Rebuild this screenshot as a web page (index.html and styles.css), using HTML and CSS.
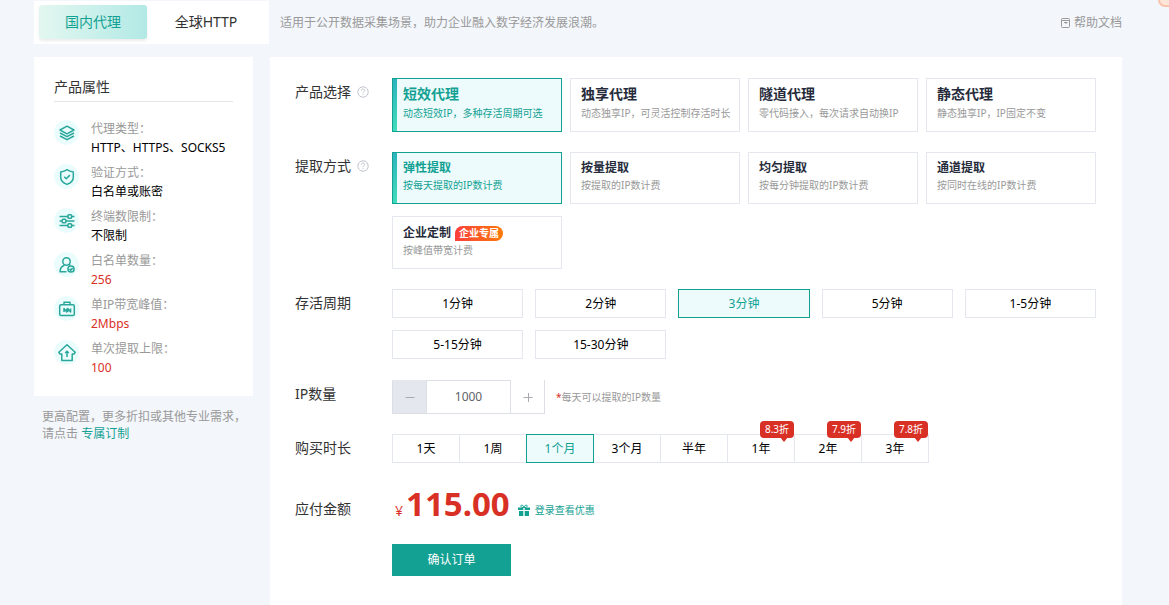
FILE: index.html
```html
<!DOCTYPE html>
<html lang="zh-CN">
<head>
<meta charset="utf-8">
<meta name="viewport" content="width=device-width, initial-scale=1">
<title>国内代理</title>
<link rel="stylesheet" href="styles.css">
</head>
<body>
<header class="topbar">
  <nav class="tabs">
    <button class="tab is-active" type="button">国内代理</button>
    <button class="tab" type="button">全球HTTP</button>
  </nav>
  <p class="topbar-note">适用于公开数据采集场景，助力企业融入数字经济发展浪潮。</p>
  <a class="help-link" href="#">
    <svg width="9" height="10" viewBox="0 0 9 10" fill="none" stroke="currentColor"><rect x=".5" y=".5" width="8" height="9" rx="1"/><path d="M1 2.5h7M3 4.5h3.5M4.5 5.5h1"/></svg>
    帮助文档
  </a>
</header>
<div class="service-badge" aria-hidden="true"></div>

<div class="layout">
  <aside class="sidebar">
    <section class="attributes">
      <h2 class="attributes-title">产品属性</h2>
      <ul class="attribute-list">
        <li class="attribute">
          <span class="attribute-icon"><svg viewBox="0 0 18 18"><path d="M9 2.2 16 6 9 9.8 2 6z"/><path d="m2 9 7 3.7L16 9M2 12l7 3.7 7-3.7"/></svg></span>
          <div><p class="attribute-name">代理类型：</p><p class="attribute-value">HTTP、HTTPS、SOCKS5</p></div>
        </li>
        <li class="attribute">
          <span class="attribute-icon"><svg viewBox="0 0 18 18"><path d="M9 1.700c2 1.500 4 2 6.300 2.200v5.300c0 3.500-2.500 5.800-6.300 7.200-3.800-1.400-6.300-3.700-6.300-7.200V3.900C5 3.700 7 3.200 9 1.700z"/><path d="m6.200 8.800 2 2 3.700-3.700"/></svg></span>
          <div><p class="attribute-name">验证方式：</p><p class="attribute-value">白名单或账密</p></div>
        </li>
        <li class="attribute">
          <span class="attribute-icon"><svg viewBox="0 0 18 18"><path d="M1.500 4.500h8.500M14 4.500h2.500M1.500 9H4M8 9h8.500M1.500 13.500h8.500M14 13.500h2.500"/><rect x="10" y="2.700" width="3.600" height="3.600" rx=".8"/><rect x="4.200" y="7.200" width="3.600" height="3.600" rx=".8"/><rect x="10" y="11.700" width="3.600" height="3.600" rx=".8"/></svg></span>
          <div><p class="attribute-name">终端数限制：</p><p class="attribute-value">不限制</p></div>
        </li>
        <li class="attribute">
          <span class="attribute-icon"><svg viewBox="0 0 18 18"><circle cx="8.500" cy="5.500" r="3.700"/><path d="M8.500 15.800H2c0-3.500 1.500-5.500 4.300-6.600M11 8.600l1.500.6"/><circle cx="13" cy="13" r="3.100"/><path d="m11.500 12.900 1.200 1.200 2-2"/></svg></span>
          <div><p class="attribute-name">白名单数量：</p><p class="attribute-value is-number">256</p></div>
        </li>
        <li class="attribute">
          <span class="attribute-icon"><svg viewBox="0 0 18 18"><rect x="1.700" y="4.700" width="14.600" height="10.800" rx="1.300"/><path d="M6 4.500V2.300h6v2.200M6 12V8.500L8.800 12V8.500M9.800 12V8.500l2.800 3.500V8.500"/></svg></span>
          <div><p class="attribute-name">单IP带宽峰值：</p><p class="attribute-value is-number">2Mbps</p></div>
        </li>
        <li class="attribute">
          <span class="attribute-icon"><svg viewBox="0 0 18 18"><path d="M9 .8 17.200 8.300 16 10h-1.800v6.600H3.800V10H2L.8 8.300z"/><path d="M9 13V7.500M7.200 9 9 7.200 10.800 9"/></svg></span>
          <div><p class="attribute-name">单次提取上限：</p><p class="attribute-value is-number">100</p></div>
        </li>
      </ul>
    </section>
    <p class="sidebar-note">更高配置，更多折扣或其他专业需求，请点击 <a href="#">专属订制</a></p>
  </aside>

  <main class="order">
    <div class="field">
      <div class="field-label">产品选择 <svg class="hint-icon" viewBox="0 0 12 12"><circle cx="6" cy="6" r="5.200"/><path d="M4.300 4.800C4.300 3.700 5 3.100 6 3.100s1.700.6 1.700 1.500C7.700 5.700 6 5.700 6 7.200M6 8.200v1"/></svg></div>
      <div class="cards">
        <button class="card card-product is-selected" type="button"><span class="card-title">短效代理</span><span class="card-text">动态短效IP，多种存活周期可选</span></button>
        <button class="card card-product" type="button"><span class="card-title">独享代理</span><span class="card-text">动态独享IP，可灵活控制存活时长</span></button>
        <button class="card card-product" type="button"><span class="card-title">隧道代理</span><span class="card-text">零代码接入，每次请求自动换IP</span></button>
        <button class="card card-product" type="button"><span class="card-title">静态代理</span><span class="card-text">静态独享IP，IP固定不变</span></button>
      </div>
    </div>

    <div class="field">
      <div class="field-label">提取方式 <svg class="hint-icon" viewBox="0 0 12 12"><circle cx="6" cy="6" r="5.200"/><path d="M4.300 4.800C4.300 3.700 5 3.100 6 3.100s1.700.6 1.700 1.500C7.700 5.700 6 5.700 6 7.200M6 8.200v1"/></svg></div>
      <div class="cards">
        <button class="card is-selected" type="button"><span class="card-title">弹性提取</span><span class="card-text">按每天提取的IP数计费</span></button>
        <button class="card" type="button"><span class="card-title">按量提取</span><span class="card-text">按提取的IP数计费</span></button>
        <button class="card" type="button"><span class="card-title">均匀提取</span><span class="card-text">按每分钟提取的IP数计费</span></button>
        <button class="card" type="button"><span class="card-title">通道提取</span><span class="card-text">按同时在线的IP数计费</span></button>
        <button class="card card-tagged" type="button"><span class="card-title">企业定制<span class="card-tag">企业专属</span></span><span class="card-text">按峰值带宽计费</span></button>
      </div>
    </div>

    <div class="field">
      <div class="field-label">存活周期</div>
      <div class="periods">
        <button class="option" type="button">1分钟</button>
        <button class="option" type="button">2分钟</button>
        <button class="option is-selected" type="button">3分钟</button>
        <button class="option" type="button">5分钟</button>
        <button class="option" type="button">1-5分钟</button>
        <button class="option" type="button">5-15分钟</button>
        <button class="option" type="button">15-30分钟</button>
      </div>
    </div>

    <div class="field">
      <label class="field-label" for="ip-count">IP数量</label>
      <div class="quantity">
        <div class="stepper">
          <button class="step is-disabled" type="button" aria-label="减少" disabled><svg viewBox="0 0 10 10"><path d="M.5 5.500h9"/></svg></button>
          <input class="step-input" id="ip-count" type="text" value="1000">
          <button class="step" type="button" aria-label="增加"><svg viewBox="0 0 10 10"><path d="M.5 5.500h9M5.500 1v9"/></svg></button>
        </div>
        <span class="quantity-note"><span class="required">*</span>每天可以提取的IP数量</span>
      </div>
    </div>

    <div class="field">
      <div class="field-label">购买时长</div>
      <div class="durations">
        <button class="option" type="button">1天</button>
        <button class="option" type="button">1周</button>
        <button class="option is-selected" type="button">1个月</button>
        <button class="option" type="button">3个月</button>
        <button class="option" type="button">半年</button>
        <button class="option" type="button">1年<span class="discount">8.3折</span></button>
        <button class="option" type="button">2年<span class="discount">7.9折</span></button>
        <button class="option" type="button">3年<span class="discount">7.8折</span></button>
      </div>
    </div>

    <div class="field field-total">
      <div class="field-label">应付金额</div>
      <div class="total">
        <span class="currency">¥</span><strong class="price">115.00</strong>
        <a class="login-link" href="#"><svg viewBox="0 0 12 12"><path d="M0 3.500h5.300V6H0zM6.700 3.500H12V6H6.700zM1 7h4.300v5H1zM6.700 7H11v5H6.700z"/><path class="bow" d="M6 3.500C3 3.500 2.500 2.500 3 1.500s2.300-.5 3 2c.7-2.500 2.500-3 3-2s0 2-3 2z"/></svg>登录查看优惠</a>
      </div>
    </div>

    <div class="submit-row"><button class="submit" type="button">确认订单</button></div>
  </main>
</div>
</body>
</html>
```
FILE: styles.css
```css
* {
  box-sizing: border-box;
}

body {
  display: flex;
  flex-direction: column;
  min-height: 100vh;
  margin: 0;
  padding: 1px 47px 0 34px;
  background: #f3f6fb;
  color: #333;
  font: 12px/18px "Noto Sans", "Noto Sans CJK SC", sans-serif;
}

p,
h2,
ul {
  margin: 0;
  padding: 0;
  list-style: none;
  font-weight: 400;
}

button,
input {
  margin: 0;
  font: inherit;
  color: inherit;
}

button {
  padding: 0;
  border: 0;
  background: none;
  cursor: pointer;
}

a {
  color: #13a193;
  text-decoration: none;
}

svg {
  flex: none;
}

/* Top bar */
.topbar {
  display: flex;
  align-items: center;
  gap: 11px;
}

.tabs {
  display: flex;
  flex: none;
  gap: 5px;
  padding: 4px 9px 5px 5px;
  background: #fff;
}

.tab {
  width: 108px;
  height: 34px;
  border-radius: 3px;
  font-size: 14px;
}

.tab.is-active {
  background: linear-gradient(90deg, #e3f7f0, #b2e9e5);
  box-shadow: 0 2px 3px rgba(0, 0, 0, 0.08);
  color: #13a193;
}

.topbar-note {
  flex: 1;
  color: #999;
}

.help-link {
  display: flex;
  align-items: center;
  gap: 4px;
  color: #999;
}

.service-badge {
  position: fixed;
  top: -13px;
  right: -9px;
  width: 20px;
  height: 20px;
  border: 2px solid #f9c4ad;
  border-radius: 7px;
  background: #fde5d8;
}

/* Page columns */
.layout {
  display: flex;
  flex: 1;
  gap: 17px;
  margin-top: 13px;
}

.sidebar {
  flex: none;
  width: 219px;
}

.attributes {
  padding: 20px 20px 18px;
  background: #fff;
}

.attributes-title {
  padding-bottom: 4px;
  border-bottom: 1px solid #e5e5e5;
  font-size: 14px;
  line-height: 20px;
}

.attribute-list {
  display: grid;
  gap: 6px;
  margin-top: 18px;
}

.attribute {
  display: flex;
  gap: 12px;
}

.attribute-icon {
  display: grid;
  place-items: center;
  width: 25px;
  height: 25px;
  border-radius: 50%;
  background: #ebfcfd;
}

.attribute-icon svg {
  width: 18px;
  height: 18px;
  fill: none;
  stroke: #2aa79b;
  stroke-width: 1.5;
  stroke-linejoin: round;
}

.attribute-name {
  color: #999;
}

.attribute-value {
  color: #000;
  line-height: 20px;
  white-space: nowrap;
}

.attribute-value.is-number {
  color: #d93026;
}

.sidebar-note {
  padding: 12px 0 0 8px;
  color: #999;
  line-height: 17px;
}

/* Order form */
.order {
  display: flex;
  flex: 1;
  flex-direction: column;
  gap: 20px;
  min-width: 0;
  padding: 21px 26px 29px 25px;
  background: #fff;
}

.field {
  display: grid;
  grid-template-columns: 97px 1fr;
}

.field-label {
  display: flex;
  align-items: center;
  gap: 6px;
  height: 28px;
  font-size: 14px;
}

.hint-icon {
  width: 12px;
  height: 12px;
  fill: none;
  stroke: #c0c4cc;
}

.cards {
  display: grid;
  grid-template-columns: repeat(4, 1fr);
  gap: 12px 8px;
}

.card {
  position: relative;
  display: flex;
  flex-direction: column;
  height: 52px;
  padding: 6px 0 0 10px;
  border: 1px solid #e4e7ed;
  background: #fff;
  text-align: left;
}

.card-product {
  height: 54px;
  padding-top: 5px;
}

.card-tagged {
  height: 53px;
  padding-top: 7px;
}

.card-title {
  display: flex;
  align-items: center;
  gap: 4px;
  color: #252b3a;
  font-weight: 700;
  line-height: 18px;
}

.card-product .card-title {
  font-size: 14px;
  line-height: 20px;
}

.card-text {
  color: #999;
  font-size: 10px;
  line-height: 16px;
  white-space: nowrap;
}

.card-product .card-text {
  line-height: 18px;
}

.card.is-selected {
  border-color: #13a193;
  background: #edfbfc;
}

.card.is-selected::before {
  content: "";
  position: absolute;
  inset: 0 auto 0 0;
  width: 4px;
  background: linear-gradient(#2bb3bd, #41ddbb);
}

.card.is-selected span {
  color: #13a193;
}

.card-tag {
  padding: 0 4px;
  border-radius: 8px 8px 8px 0;
  background: linear-gradient(90deg, #fb3f3b, #fd7a0b);
  color: #fff;
  font-size: 10px;
  line-height: 15px;
}

.option {
  position: relative;
  height: 29px;
  border: 1px solid #e4e7ed;
  background: #fff;
  color: #000;
}

.option.is-selected {
  z-index: 1;
  border-color: #13a193;
  background: #edfbfc;
  color: #13a193;
}

.periods {
  display: grid;
  grid-template-columns: repeat(5, 1fr);
  gap: 12px;
  padding-bottom: 1px;
}

.quantity {
  display: flex;
  align-items: center;
  gap: 11px;
}

.stepper {
  display: flex;
  height: 34px;
  border: 1px solid #dcdfe6;
  border-top: 0;
}

.step {
  display: grid;
  place-items: center;
  width: 33px;
}

.step.is-disabled {
  background: #e4e7ed;
}

.step svg {
  width: 10px;
  height: 10px;
  stroke: #a8abb2;
}

.step-input {
  width: 85px;
  border: 1px solid #dcdfe6;
  border-bottom: 0;
  background: #fff;
  color: #606266;
  text-align: center;
}

.quantity-note {
  color: #999;
  font-size: 10px;
}

.required {
  color: #d93026;
}

.durations {
  display: flex;
}

.durations .option {
  width: 68px;
  margin-right: -1px;
}

.discount {
  position: absolute;
  top: -14px;
  right: 0;
  z-index: 2;
  width: 34px;
  border-radius: 4px;
  background: #d93026;
  color: #fff;
  font-size: 10px;
  line-height: 17px;
}

.discount::after {
  content: "";
  position: absolute;
  top: 16px;
  right: 6px;
  border: 4px solid transparent;
  border-top: 5px solid #d93026;
  border-bottom: 0;
}

.field-total .field-label {
  margin-top: 12px;
}

.total {
  display: flex;
  align-items: baseline;
  height: 41px;
  padding-left: 3px;
  color: #d93026;
}

.currency {
  margin-right: 3px;
  font-size: 14px;
}

.price {
  font-size: 33px;
  line-height: 41px;
}

.login-link {
  display: flex;
  align-items: center;
  gap: 5px;
  margin-left: 8px;
  font-size: 10px;
}

.login-link svg {
  width: 12px;
  height: 12px;
  fill: currentColor;
}

.login-link .bow {
  fill: none;
  stroke: currentColor;
}

.submit-row {
  padding-left: 97px;
}

.submit {
  width: 119px;
  height: 32px;
  background: #13a193;
  color: #fff;
}
```
